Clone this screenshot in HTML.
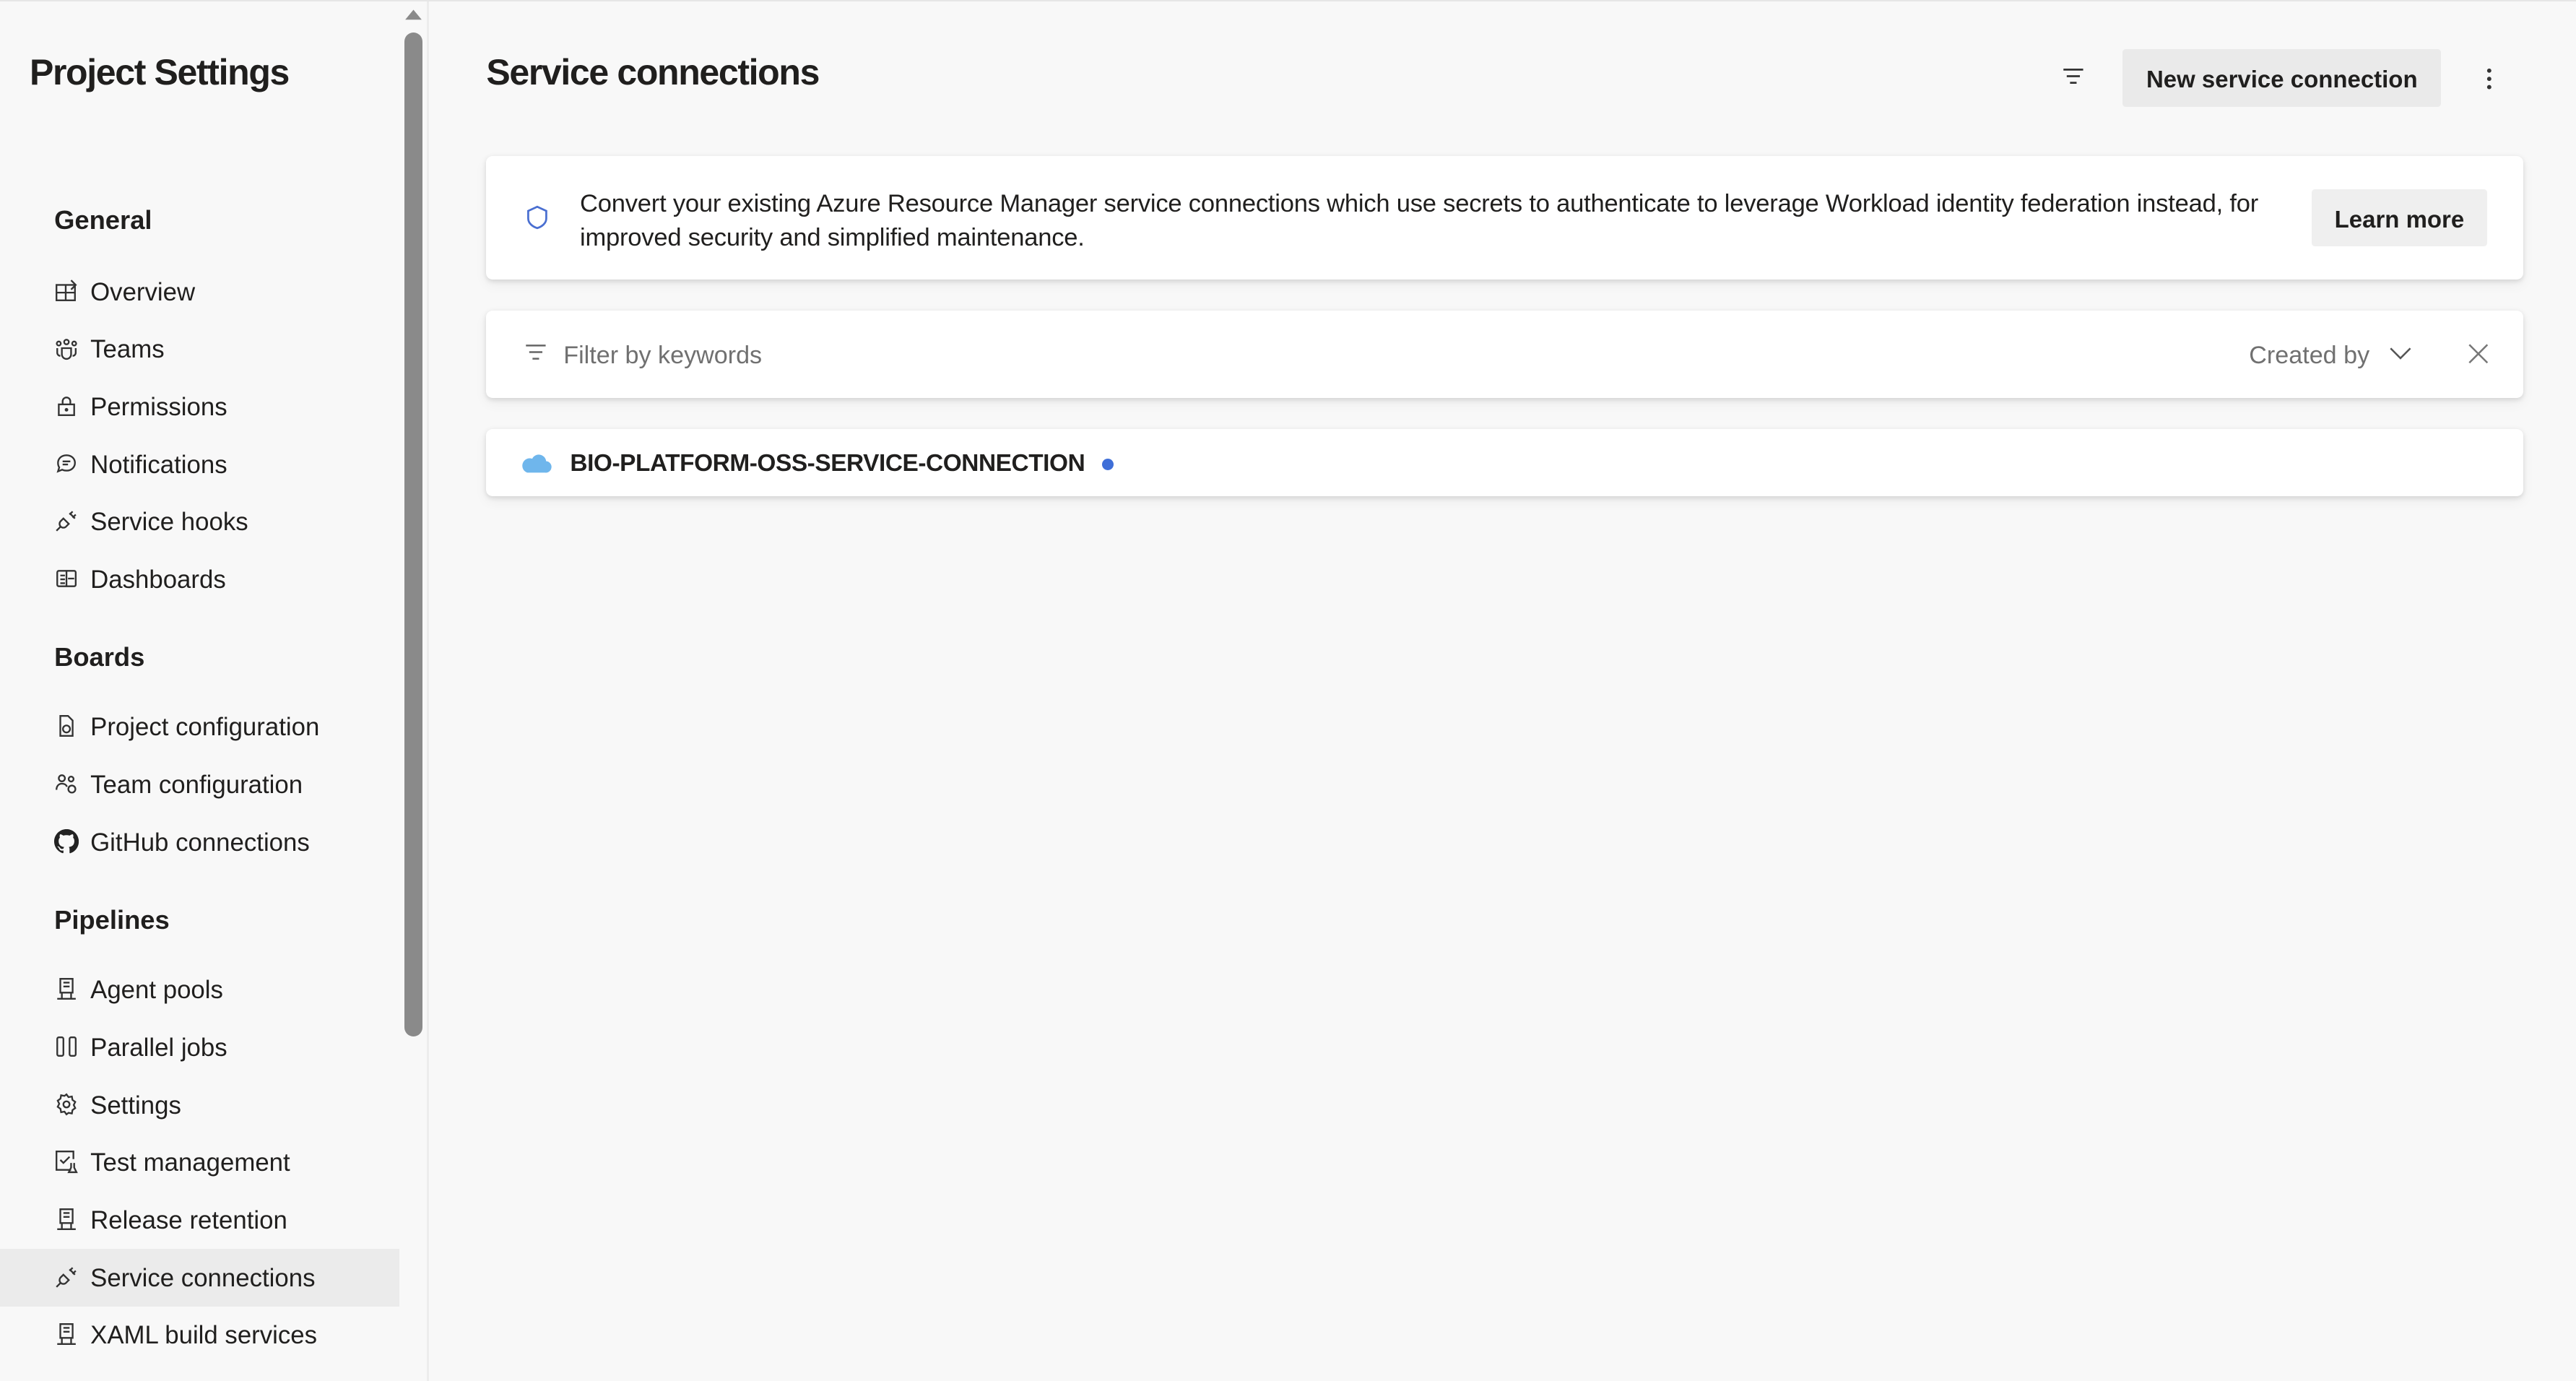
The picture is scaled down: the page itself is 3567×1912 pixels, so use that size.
<!DOCTYPE html>
<html><head><meta charset="utf-8"><style>
html,body{margin:0;padding:0;width:3567px;height:1912px;overflow:hidden;background:#f8f8f8}
#w{zoom:2.27487;width:1568px;height:841px;position:relative;font-family:"Liberation Sans",sans-serif;color:#201f1e}
.a{position:absolute;white-space:nowrap}
.top{left:0;top:0;width:1568px;height:1px;background:#e6e6e6}
.side{left:0;top:1px;width:243px;height:840px;background:#f8f8f8}
.sb{left:246px;top:20px;width:11px;height:611px;border-radius:6px;background:#8a8a8a}
.div{left:260px;top:1px;width:1px;height:840px;background:#ececec}
.h1{font-size:22px;font-weight:600;letter-spacing:-0.6px}
.sec{left:33px;font-size:16px;font-weight:600}
.it{left:55px;font-size:15.3px;transform:translateY(-45%)}
.ic{left:33px;width:15px;height:15px;transform:translateY(-50%)}
.sel{left:0;top:760px;width:243px;height:35px;background:#ebebeb}
.card{background:#fff;border-radius:4px;box-shadow:0 1px 3px rgba(0,0,0,.12),0 3px 8px rgba(0,0,0,.05)}
.btn{background:#eaeaea;border-radius:2px;font-size:14.5px;font-weight:600;text-align:center}
</style></head><body><div id="w">
<div class="a top"></div>
<div class="a side"></div>
<div class="a sel"></div>
<svg class="a" style="left:246px;top:4px" width="11" height="9"><path d="M0.5 8 L5.5 2 L10.5 8Z" fill="#8a8a8a"/></svg>
<div class="a sb"></div>
<div class="a div"></div>

<div class="a h1" style="left:18px;top:31px">Project Settings</div>
<div class="a sec" style="top:125px">General</div>
<div class="a sec" style="top:391px">Boards</div>
<div class="a sec" style="top:551px">Pipelines</div>

<svg class="a ic" style="top:177px" viewBox="0 0 16 16" fill="none" stroke="#333" stroke-width="1.1"><rect x="1.5" y="4" width="12" height="10"/><path d="M7.5 4v10M1.5 9h12M11 1l3 3-3 3"/></svg>
<div class="a it" style="top:177px">Overview</div>
<svg class="a ic" style="top:212px" viewBox="0 0 16 16" fill="none" stroke="#333" stroke-width="1.1"><circle cx="3" cy="5" r="1.3"/><circle cx="8" cy="4" r="1.5"/><circle cx="13" cy="5" r="1.3"/><path d="M5 8h6v4a3 3 0 0 1-6 0zM2 8v3a2 2 0 0 0 2 2M14 8v3a2 2 0 0 1-2 2"/></svg>
<div class="a it" style="top:212px">Teams</div>
<svg class="a ic" style="top:247px" viewBox="0 0 16 16" fill="none" stroke="#333" stroke-width="1.1"><rect x="3" y="7" width="10" height="7"/><path d="M5.5 7V5a2.5 2.5 0 0 1 5 0v2"/><circle cx="8" cy="10.5" r=".6" fill="#333"/></svg>
<div class="a it" style="top:247px">Permissions</div>
<svg class="a ic" style="top:282px" viewBox="0 0 16 16" fill="none" stroke="#333" stroke-width="1.1"><path d="M8 2.5c3.3 0 5.5 2.2 5.5 5s-2.2 5-5.5 5c-1 0-2-.2-2.8-.6L2.5 13l.8-2.6C2.7 9.6 2.5 8.6 2.5 7.5c0-2.8 2.2-5 5.5-5zM5.5 6.5h5M5.5 8.5h3.5"/></svg>
<div class="a it" style="top:282px">Notifications</div>
<svg class="a ic" style="top:317px" viewBox="0 0 16 16" fill="none" stroke="#333" stroke-width="1.1"><path d="M1.5 14.5l3-3M6 6.5l3.5 3.5-2 2a2.5 2.5 0 0 1-3.5-3.5zM10 3l3.5 3.5M12 2l-2 2M14 4l-2 2"/></svg>
<div class="a it" style="top:317px">Service hooks</div>
<svg class="a ic" style="top:352px" viewBox="0 0 16 16" fill="none" stroke="#333" stroke-width="1.1"><rect x="2" y="3" width="12" height="10" rx="1"/><path d="M8 3v10M4 6h3M4 8.5h3M4 11h3M9 8h4"/></svg>
<div class="a it" style="top:352px">Dashboards</div>

<svg class="a ic" style="top:442px" viewBox="0 0 16 16" fill="none" stroke="#333" stroke-width="1.1"><path d="M4 1.5h5l3 3v10H4z"/><circle cx="8" cy="10" r="2.3"/></svg>
<div class="a it" style="top:442px">Project configuration</div>
<svg class="a ic" style="top:477px" viewBox="0 0 16 16" fill="none" stroke="#333" stroke-width="1.1"><circle cx="5" cy="4.5" r="2"/><circle cx="11" cy="5" r="1.6"/><path d="M1.5 12c0-2.5 1.5-4 3.5-4s3 1 3.3 2"/><circle cx="11.5" cy="11.5" r="2.3"/></svg>
<div class="a it" style="top:477px">Team configuration</div>
<svg class="a ic" style="top:512px" viewBox="0 0 16 16"><path fill="#222" d="M8 0C3.58 0 0 3.58 0 8c0 3.54 2.290 6.530 5.470 7.590.4.07.55-.17.55-.38v-1.330c-2.230.48-2.700-1.070-2.700-1.070-.36-.92-.89-1.170-.89-1.170-.73-.5.06-.49.06-.49.8.06 1.230.83 1.230.83.72 1.220 1.870.87 2.330.67.07-.52.28-.87.51-1.070-1.780-.2-3.650-.89-3.650-3.950 0-.87.31-1.590.82-2.150-.08-.2-.36-1.020.08-2.120 0 0 .67-.21 2.200.82a7.600 7.600 0 0 1 4 0c1.530-1.040 2.200-.82 2.200-.82.44 1.100.16 1.920.08 2.120.51.56.82 1.270.82 2.150 0 3.070-1.870 3.750-3.650 3.950.29.25.54.73.54 1.480v2.200c0 .21.15.46.55.38A8 8 0 0 0 16 8c0-4.420-3.580-8-8-8z"/></svg>
<div class="a it" style="top:512px">GitHub connections</div>

<svg class="a ic" style="top:602px" viewBox="0 0 16 16" fill="none" stroke="#333" stroke-width="1.1"><path d="M4 1.5h8v9H4zM2 14.5h12M5 10.5v4M11 10.5v4M6 4h4M6 6.5h4"/></svg>
<div class="a it" style="top:602px">Agent pools</div>
<svg class="a ic" style="top:637px" viewBox="0 0 16 16" fill="none" stroke="#333" stroke-width="1.1"><rect x="2" y="2" width="4" height="12" rx="1"/><rect x="10" y="2" width="4" height="12" rx="1"/></svg>
<div class="a it" style="top:637px">Parallel jobs</div>
<svg class="a ic" style="top:672px" viewBox="0 0 16 16" fill="none" stroke="#333" stroke-width="1.1"><circle cx="8" cy="8" r="2"/><path d="M8 1.5l1.3 1.8 2.2-.4.4 2.2 1.8 1.3-1 2 1 2-1.8 1.3-.4 2.2-2.2-.4L8 14.5l-1.3-1.8-2.2.4-.4-2.2-1.8-1.3 1-2-1-2 1.8-1.3.4-2.2 2.2.4z"/></svg>
<div class="a it" style="top:672px">Settings</div>
<svg class="a ic" style="top:707px" viewBox="0 0 16 16" fill="none" stroke="#333" stroke-width="1.1"><path d="M11 13.5H1.5v-12h11v5M4 7l2 2 4-4M11 9v3l-1.5 3h5L13 12V9"/></svg>
<div class="a it" style="top:707px">Test management</div>
<svg class="a ic" style="top:742px" viewBox="0 0 16 16" fill="none" stroke="#333" stroke-width="1.1"><path d="M4 1.5h8v9H4zM2 14.5h12M5 10.5v4M11 10.5v4M6 4h4M6 6.5h4"/></svg>
<div class="a it" style="top:742px">Release retention</div>
<svg class="a ic" style="top:777px" viewBox="0 0 16 16" fill="none" stroke="#333" stroke-width="1.1"><path d="M1.5 14.5l3-3M6 6.5l3.5 3.5-2 2a2.5 2.5 0 0 1-3.5-3.5zM10 3l3.5 3.5M12 2l-2 2M14 4l-2 2"/></svg>
<div class="a it" style="top:777px">Service connections</div>
<svg class="a ic" style="top:812px" viewBox="0 0 16 16" fill="none" stroke="#333" stroke-width="1.1"><path d="M4 1.5h8v9H4zM2 14.5h12M5 10.5v4M11 10.5v4M6 4h4M6 6.5h4"/></svg>
<div class="a it" style="top:812px">XAML build services</div>

<div class="a h1" style="left:296px;top:31px">Service connections</div>
<svg class="a" style="left:1255px;top:41px" width="14" height="12" fill="none" stroke="#333" stroke-width="1.2"><path d="M1 1.5h12M3 5.5h8M5 9.5h4"/></svg>
<div class="a btn" style="left:1292px;top:30px;width:194px;height:35px;line-height:37px">New service connection</div>
<svg class="a" style="left:1512px;top:40px" width="6" height="16"><circle cx="3" cy="3" r="1.3" fill="#333"/><circle cx="3" cy="8" r="1.3" fill="#333"/><circle cx="3" cy="13" r="1.3" fill="#333"/></svg>

<div class="a card" style="left:296px;top:95px;width:1240px;height:75px"></div>
<svg class="a" style="left:320px;top:125px" width="14" height="15" fill="none" stroke="#4a6fd1" stroke-width="1.2"><path d="M7 1L12.5 3.5V8c0 3-2.5 5-5.5 6C4 13 1.5 11 1.5 8V3.5z"/></svg>
<div class="a" style="left:353px;top:114px;font-size:15.2px;letter-spacing:-0.1px;line-height:20.5px">Convert your existing Azure Resource Manager service connections which use secrets to authenticate to leverage Workload identity federation instead, for<br>improved security and simplified maintenance.</div>
<div class="a btn" style="left:1407px;top:115px;width:107px;height:35px;line-height:37px;background:#efefef">Learn more</div>

<div class="a card" style="left:296px;top:189px;width:1240px;height:53px"></div>
<svg class="a" style="left:319px;top:209px" width="14" height="12" fill="none" stroke="#666" stroke-width="1.1"><path d="M1 1.5h12M3 5.5h8M5 9.5h4"/></svg>
<div class="a" style="left:343px;top:208px;font-size:15px;color:#707070">Filter by keywords</div>
<div class="a" style="left:1369px;top:208px;font-size:15px;color:#707070">Created by</div>
<svg class="a" style="left:1454px;top:211px" width="14" height="9" fill="none" stroke="#555" stroke-width="1.1"><path d="M1 1l6 6 6-6"/></svg>
<svg class="a" style="left:1502px;top:209px" width="13" height="13" fill="none" stroke="#777" stroke-width="1.1"><path d="M1 1l11 11M12 1L1 12"/></svg>

<div class="a card" style="left:296px;top:261px;width:1240px;height:41px"></div>
<svg class="a" style="left:317px;top:275px" width="19" height="13"><path d="M4 12.5h11a3.5 3.5 0 0 0 .5-7A4.5 4.5 0 0 0 7 4 3.5 3.5 0 0 0 4 12.5z" fill="#6fb6ec"/></svg>
<div class="a" style="left:347px;top:274px;font-size:14.7px;font-weight:600;letter-spacing:-0.2px">BIO-PLATFORM-OSS-SERVICE-CONNECTION</div>
<div class="a" style="left:671px;top:279px;width:7px;height:7px;border-radius:50%;background:#3f6fd8"></div>
</div></body></html>
